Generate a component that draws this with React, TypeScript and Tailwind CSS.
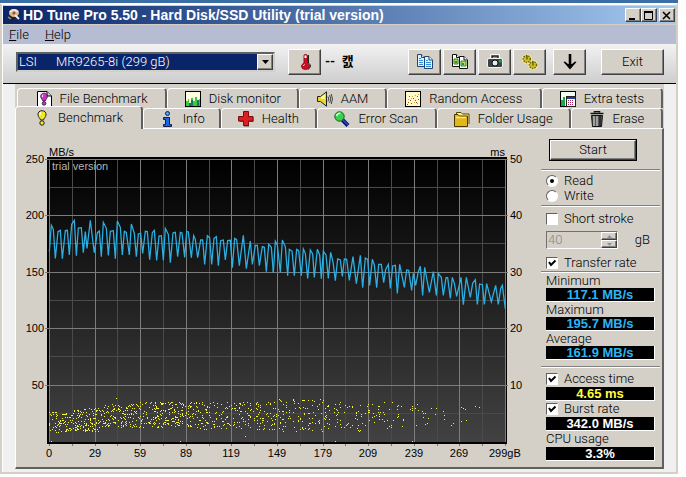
import type { ReactNode } from 'react';

const RAISED =
  'border border-t-white border-l-white border-r-[#404040] border-b-[#404040] bg-[#d4d0c8] shadow-[inset_-1px_-1px_0_#808080]';

const Icon = ({ children }: { children: ReactNode }) => (
  <svg width="16" height="16" viewBox="0 0 16 16" className="flex-shrink-0" aria-hidden="true">
    {children}
  </svg>
);

const DiskIcon = () => (
  <Icon>
    <path d="M1 9 L9 5 L13 9 L5 14 Z" fill="#222" />
    <ellipse cx="8" cy="6" rx="5" ry="4" fill="#d9b48c" />
    <path d="M4 5 Q8 1 12 5" stroke="#f7e3c8" strokeWidth="2" fill="none" />
    <circle cx="8" cy="6" r="1.5" fill="#8a5a34" />
    <path d="M9 8 L13 12" stroke="#eee" strokeWidth="2" />
    <path d="M2 10 L5 12" stroke="#9a9a9a" strokeWidth="1.5" />
  </Icon>
);

const BulbShape = ({ fill }: { fill: string }) => (
  <>
    <path d="M8 .7 C5.2 .7 3.7 2.6 4 5 C4.400 7.500 6.200 8.200 6.500 10 H9.500 C9.800 8.200 11.600 7.500 12 5 C12.300 2.600 10.800 .7 8 .7 Z" fill={fill} stroke="#222" />
    <path d="M7 2.200 Q5.600 3.400 6 5.500" stroke="#fff" strokeWidth="1.200" fill="none" />
    <circle cx="8" cy="13" r="2.200" fill={fill} stroke="#222" />
  </>
);

const BulbIcon = () => (
  <Icon>
    <BulbShape fill="#f2e81c" />
  </Icon>
);

const FileBulbIcon = () => (
  <Icon>
    <path d="M1.500 .5 H11 L15.500 5 V15.500 H1.500 Z" fill="#fff" stroke="#000" />
    <path d="M11 .5 V5 H15.500" fill="#ccc" stroke="#000" />
    <g transform="translate(1.400 1.600) scale(.83)">
      <BulbShape fill="#d62ad0" />
    </g>
  </Icon>
);

const MonitorIcon = () => (
  <Icon>
    <rect x=".5" y=".5" width="15" height="15" fill="#fffde0" stroke="#000" />
    <path d="M1 15 V10 H3 V8 H4 V12 H6 V7 H8 V10 H10 V6 H12 V9 H14 V8 H15 V15 Z" fill="#3ecb3a" />
    <path d="M4 15 V12 H6 V9 H8 V15 Z M12 15 V9 H14 V15 Z" fill="#0d7c62" />
  </Icon>
);

const SpeakerIcon = () => (
  <Icon>
    <path d="M.5 5.500 H3.500 L9.500 .8 V15.200 L3.500 10.500 H.5 Z" fill="#ecd820" stroke="#222" />
    <path d="M4 6 L8 3 V8 H4 Z" fill="#fff68c" />
    <path d="M11 5.500 Q12.500 8 11 10.500 M12.700 4 Q14.800 8 12.700 12 M14.300 3 Q16.600 8 14.300 13" stroke="#444" fill="none" />
  </Icon>
);

const RandomIcon = () => (
  <Icon>
    <rect x=".5" y=".5" width="15" height="15" fill="#fff9cf" stroke="#000" />
    <path d="M3 11.500h1M5 9.500h1M6 12.500h1M8 7.500h1M10 9.500h1M12 5.500h1M4 5.500h1M11 11.500h1M13 8.500h1M2 13.500h1" stroke="#a04c10" />
    <path d="M3 8.500h1M7 5.500h1M9 11.500h1M12 12.500h1M10 4.500h1M6 7.500h1M13 3.500h1" stroke="#d8a020" />
  </Icon>
);

const ExtraIcon = () => (
  <Icon>
    <rect x=".5" y=".5" width="15" height="15" fill="#f4fff4" stroke="#000" />
    <path d="M1 15 V9 H3 V6 H5 V15 Z" fill="#1da54a" />
    <rect x="6.500" y="5.500" width="9" height="10" fill="#fff" stroke="#222" />
    <path d="M7 7 H15" stroke="#283a9c" strokeWidth="2" />
    <path d="M8 9.500h1M10 9.500h1M12 9.500h1M8 11.500h1M10 11.500h1M12 11.500h1M8 13.500h1M10 13.500h1M12 13.500h1" stroke="#a02060" />
  </Icon>
);

const InfoIcon = () => (
  <Icon>
    <circle cx="8.500" cy="2.500" r="2" fill="#49a8f4" stroke="#0a1c50" />
    <path d="M4.500 6.500 H10.500 V13.500 H12.500 V15.500 H4.500 V13.500 H6.500 V8.500 H4.500 Z" fill="#1c66e0" stroke="#0a1c50" />
  </Icon>
);

const HealthIcon = () => (
  <Icon>
    <path d="M6 1.500 H11 V6 H15.500 V11 H11 V15.500 H6 V11 H1.500 V6 H6 Z" fill="#555" />
    <path d="M5.500 .5 H10.500 V5.500 H15 V10 H10.500 V14.500 H5.500 V10 H.5 V5.500 H5.500 Z" fill="#dd1f22" stroke="#7a0c0c" />
  </Icon>
);

const ScanIcon = () => (
  <Icon>
    <path d="M8.500 9 L14 14.500" stroke="#0b1560" strokeWidth="4" />
    <path d="M9 9 L14 14" stroke="#2848d8" strokeWidth="1.500" />
    <circle cx="5.500" cy="5.500" r="4.700" fill="#35d148" stroke="#145c20" />
    <path d="M2.500 5 Q3.500 2 6.500 2.300" stroke="#d6ffd6" strokeWidth="1.500" fill="none" />
  </Icon>
);

const FolderIcon = () => (
  <Icon>
    <path d="M2.500 13 V1.500 H7 L8.500 3 H15 V13" fill="#fff3a0" stroke="#5a4300" />
    <path d="M.5 3.500 H4 L5.500 5 H13.500 V15.500 H.5 Z" fill="#e2b71e" stroke="#4a3700" />
    <path d="M2 6.500 H12" stroke="#fbe873" strokeWidth="1.500" />
  </Icon>
);

const TrashIcon = () => (
  <Icon>
    <path d="M5.500 1.500 V.5 H10.500 V1.500 M1.500 2.500 H14.500" stroke="#111" strokeWidth="1.600" fill="none" />
    <path d="M2.500 4.500 H13.500 L12.500 15.500 H3.500 Z" fill="#555" stroke="#111" />
    <path d="M5 5 V15 M8 5 V15" stroke="#c8c8c8" strokeWidth="1.300" />
    <path d="M11 5 V15" stroke="#222" strokeWidth="1.500" />
  </Icon>
);

const ThermometerIcon = () => (
  <Icon>
    <path d="M7 9 V1.500 Q7 .5 8.500 .5 Q10 .5 10.500 1.500 V9 Q12.500 10.500 12.500 12 Q12 15.500 8.500 15.500 Q4.500 15.500 4.500 12 Q5 10 7 9 Z" fill="#cf1020" stroke="#8c1018" />
    <path d="M7.500 1.500 H9.500 V4 H7.500 Z" fill="#fff" />
    <path d="M11.500 1 V9 Q13.500 10.500 13.500 12 Q13 14.500 11 15.500" stroke="#222" fill="none" />
    <path d="M6.500 12 Q6.500 11 7.500 10.500" stroke="#fff" fill="none" />
  </Icon>
);

const CopyPages = ({ pictures = false }: { pictures?: boolean }) => (
  <Icon>
    <g fill={pictures ? '#fff' : '#dff0ff'} stroke={pictures ? '#111' : '#24446c'}>
      <path d="M.5 .5 H4.500 L7.500 3.500 V12.500 H.5 Z" />
      <path d="M4.500 .5 V3.500 H7.500" />
      <path d="M7.500 2.500 H12 L15.500 6 V14.500 H7.500 Z" />
      <path d="M12 2.500 V6 H15.500" />
    </g>
    {pictures ? (
      <>
        <path d="M2 5 H6 V10 H2 Z M9 7 H14 V12 H9 Z" fill="#c4dc50" stroke="#2e7e26" />
        <path d="M3 7 H5 V9 H3 Z M10 9 H12 V11 H10 Z" fill="#1b9a36" />
      </>
    ) : (
      <path d="M2 4.500 H4 M2 6.500 H6 M2 8.500 H6 M2 10.500 H6 M9 6.500 H11 M9 8.500 H14 M9 10.500 H14 M9 12.500 H14" stroke="#2f8be8" />
    )}
  </Icon>
);

const CameraIcon = () => (
  <Icon>
    <path d="M4.500 5 V1.500 H11.500 V5" fill="#bbb" stroke="#fff" strokeWidth="2.500" />
    <path d="M5 5 V2 H11 V5" fill="#999" stroke="#222" strokeWidth="1.500" />
    <rect x=".5" y="4.500" width="15" height="9" rx="1.500" fill="#3c4146" stroke="#f2f2f2" />
    <circle cx="8" cy="9" r="3" fill="#e8eef0" stroke="#111" />
    <path d="M12 6 H14.500 V8.500 H12 Z" fill="#22a64c" />
  </Icon>
);

const GearsIcon = () => (
  <Icon>
    <g stroke="#f7f3a4" strokeWidth="2" fill="#cfc01e">
      <ellipse cx="4.800" cy="5" rx="4" ry="3.800" />
      <ellipse cx="11" cy="11" rx="4" ry="3.800" />
    </g>
    <g fill="#cfc01e" stroke="#6e6510" strokeWidth="1.500" strokeDasharray="1.500 1">
      <ellipse cx="4.800" cy="5" rx="3.600" ry="3.400" />
      <ellipse cx="11" cy="11" rx="3.600" ry="3.400" />
    </g>
    <path d="M5 1.500 V5.500 M11 7.500 V11.500" stroke="#3a3500" />
  </Icon>
);

const ArrowDownIcon = () => (
  <Icon>
    <path d="M8 0 V12" stroke="#000" strokeWidth="2.600" />
    <path d="M1.500 8 L3 7.500 L6 10 H10 L13 7.500 L14.500 8 L8 15.500 Z" fill="#000" />
  </Icon>
);

// x,y pairs in thirds of a pixel, from the top left corner of the axis area
const RATE_START = `103,335 109,256 115,268 121,355 129,275 136,271 142,356 151,272 157,271 163,345 170,253 178,241 184,347
190,264 199,263 205,338 211,275 216,325 226,241 233,300 238,338 247,278 253,273 259,350 265,247 274,265 280,346 286,274
295,272 301,356 307,243 316,262 322,345 328,274 334,277 343,345 349,252 358,280 364,350 370,282 377,280 383,340 391,274
397,275 404,359 412,278 418,271 425,361 432,288 439,287 445,361 451,265 460,283 466,368 474,279 481,277 488,350 496,277
501,279 509,352 515,274 520,276 529,353 536,287 541,298 548,353 557,300 563,300 569,373 577,287 584,293 590,373 597,295
604,290 610,377 617,302 625,300 631,360 638,302 646,301 652,383 659,295 665,299 673,377 685,286 694,386 706,303 712,373
721,316 727,316 733,377 742,320 748,322 754,395 761,313 769,322 775,398`;

const RATE_END = `10,398 16,304 22,315 31,397 37,300 46,320 53,407 58,328 66,333 73,407 80,328 86,332 94,407 100,327 106,340
113,415 121,330 128,342 133,412 142,328 149,345 154,416 160,334 168,345 175,415 182,337 189,365 196,422 203,357 211,360
217,409 223,357 230,358 238,421 249,350 259,431 271,346 278,443 286,354 293,358 299,436 307,358 313,375 320,443 326,373
334,373 341,428 347,388 355,373 361,445 368,378 376,376 382,460 389,373 403,442 410,390 416,391 425,451 430,400 437,436
445,395 451,379 458,466 464,382 478,457 490,395 499,466 505,401 514,412 520,466 528,413 533,413 541,475 547,412 553,430
560,469 573,412 580,494 589,412 601,472 608,430 616,419 622,493 629,432 637,434 643,493 650,431 664,485 677,436 685,493
692,445 697,436 706,506`;

const makeAccessDots = () => {
  let seed = 7219;
  const rand = () => {
    seed = (seed * 16807) % 2147483647;
    return seed / 2147483647;
  };
  // from, to, number of dots, top and bottom of the band
  const bands = [
    [49, 62, 42, 412, 433],
    [62, 82, 80, 410, 432],
    [82, 100, 75, 408, 432],
    [100, 140, 140, 404, 428],
    [140, 200, 220, 402, 428],
    [200, 277, 190, 402, 430],
    [277, 325, 95, 399, 432],
    [325, 370, 70, 402, 432],
    [370, 394, 28, 402, 431],
    [394, 440, 28, 402, 427],
    [440, 480, 12, 400, 427],
  ];
  let d = 'M51 441h1M116 398h1M180 441h1M245 436h1M335 441h1M412 441h1';
  bands.forEach(([from, to, count, top, bottom]) => {
    for (let i = 0; i < count; i++) {
      const x = Math.floor(from + rand() * (to - from));
      const y = Math.floor(top + rand() * (bottom - top));
      d += `M${x} ${y}h1`;
    }
  });
  return d;
};

const ACCESS_DOTS = makeAccessDots();
const X_LABELS = ['0', '29', '59', '89', '119', '149', '179', '209', '239', '269'];
const Y_LINES = [159, 215, 272, 328, 385];
const column = (i: number) => Math.round(49 + i * 22.8);

const Chart = () => (
  <svg
    viewBox="16 129 524 338"
    className="block w-full font-['Liberation_Sans',Arial,sans-serif] text-[11px]"
    role="img"
    aria-label="Transfer rate and access time"
  >
    <defs>
      <linearGradient id="plot" x1="0" y1="0" x2="0" y2="1">
        <stop offset="0" stopColor="#000" />
        <stop offset="1" stopColor="#424242" />
      </linearGradient>
    </defs>
    <rect x="47" y="157" width="460" height="287" fill="#000" />
    <rect x="49" y="159" width="457" height="283" fill="url(#plot)" />
    <g shapeRendering="crispEdges">
      {Y_LINES.map((y) => (
        <rect key={y} x="49" y={y + 28} width="457" height="1" fill="#4a4a4a" />
      ))}
      {Array.from({ length: 21 }, (_, i) => (
        <rect key={i} x={column(i)} y="159" width="1" height="283" fill={i % 2 ? '#4a4a4a' : '#7c7c7c'} />
      ))}
      {Y_LINES.map((y) => (
        <rect key={y} x="45" y={y} width="463" height="1" fill="#7c7c7c" />
      ))}
      {Array.from({ length: 21 }, (_, i) => (
        <rect key={i} x={column(i)} y="444" width="1" height="2" fill="#777" />
      ))}
      <path d={ACCESS_DOTS} transform="translate(0 .5)" stroke="#f4f431" fill="none" />
    </g>
    <g fill="none" stroke="#2cb0e4" strokeWidth="3.800">
      <polyline points={RATE_START} transform="translate(15 140) scale(.33333)" />
      <polyline points={RATE_END} transform="translate(270 140) scale(.33333)" />
    </g>
    <text x="49" y="156">MB/s</text>
    <text x="505" y="156" textAnchor="end">ms</text>
    <text x="52" y="170" fill="#b4b4b4">trial version</text>
    {Y_LINES.map((y, i) => (
      <g key={y}>
        <text x="44" y={y + 4} textAnchor="end">{250 - i * 50}</text>
        <text x="510" y={y + 4}>{50 - i * 10}</text>
      </g>
    ))}
    {X_LABELS.map((label, i) => (
      <text key={label} x={column(i * 2)} y="457" textAnchor="middle">{label}</text>
    ))}
    <text x="489" y="457">299gB</text>
  </svg>
);

const Tab = ({ icon, label, className }: { icon: ReactNode; label: string; className: string }) => (
  <button
    type="button"
    role="tab"
    className={`flex grow items-center justify-center gap-2 rounded-t-sm border-t border-l border-r-2 border-t-white border-l-white border-r-[#606060] bg-[#d4d0c8] whitespace-nowrap ${className}`}
  >
    {icon}
    {label}
  </button>
);

const ToolButton = ({ label, children }: { label: string; children: ReactNode }) => (
  <button type="button" aria-label={label} className={`flex h-[26px] w-[33px] items-center justify-center ${RAISED}`}>
    {children}
  </button>
);

const Check = ({ label, checked = false }: { label: string; checked?: boolean }) => (
  <label className="ml-[5px] flex h-4 items-center gap-[6px]">
    <span className="grid">
      <input
        type="checkbox"
        defaultChecked={checked}
        className="peer col-start-1 row-start-1 size-3 appearance-none border border-t-[#606060] border-r-white border-b-white border-l-[#606060] bg-white"
      />
      <svg viewBox="0 0 12 12" className="pointer-events-none invisible col-start-1 row-start-1 size-3 peer-checked:visible">
        <path d="M3 5 L5 8 L9.500 3.500" stroke="#000" strokeWidth="2" fill="none" />
      </svg>
    </span>
    {label}
  </label>
);

const Radio = ({ label, checked = false }: { label: string; checked?: boolean }) => (
  <label className="ml-[5px] flex h-[15px] items-center gap-[6px]">
    <span className="grid place-items-center">
      <input
        type="radio"
        name="mode"
        defaultChecked={checked}
        className="peer col-start-1 row-start-1 size-3 appearance-none rounded-full border border-t-[#606060] border-r-white border-b-white border-l-[#606060] bg-white"
      />
      <span className="pointer-events-none invisible col-start-1 row-start-1 size-1 rounded-full bg-black peer-checked:visible" />
    </span>
    {label}
  </label>
);

const Readout = ({ value, color }: { value: string; color: string }) => (
  <output className={`mr-[5px] ml-[5px] block h-[14px] border-r border-b border-white bg-black text-center font-['Liberation_Sans',Arial,sans-serif] text-[13px] leading-[13px] font-bold ${color}`}>
    {value}
  </output>
);

const Divider = () => <hr className="h-[2px] border-t border-b border-t-[#808080] border-b-white" />;

const Sidebar = () => (
  <div className="w-[122px] flex-shrink-0 pt-[10px] pr-[2px] pl-px">
    <button type="button" className="ml-2 block h-[22px] w-[88px] border border-black">
      <span className={`flex h-5 items-center justify-center ${RAISED}`}>Start</span>
    </button>
    <div className="mt-2">
      <Divider />
    </div>
    <div className="py-[2px]">
      <Radio label="Read" checked />
      <Radio label="Write" />
    </div>
    <Divider />
    <div className="pt-1">
      <Check label="Short stroke" />
    </div>
    <div className="mt-1 ml-[5px] flex h-[18px] items-center justify-between pr-[10px]">
      <div className="flex h-[18px] w-[72px] items-center border border-t-[#707070] border-r-white border-b-white border-l-[#707070] pl-px">
        <input aria-label="Short stroke size" disabled defaultValue="40" className="w-0 flex-1 text-[#8a8680]" />
        <span className="flex h-full w-4 flex-col">
          <button type="button" disabled aria-label="Increase" className={`flex flex-1 items-center justify-center ${RAISED}`}>
            <svg width="5" height="3" viewBox="0 0 5 3"><path d="M0 3 L2.500 0 L5 3 Z" fill="#909090" /></svg>
          </button>
          <button type="button" disabled aria-label="Decrease" className={`flex flex-1 items-center justify-center ${RAISED}`}>
            <svg width="5" height="3" viewBox="0 0 5 3"><path d="M0 0 L2.500 3 L5 0 Z" fill="#909090" /></svg>
          </button>
        </span>
      </div>
      gB
    </div>
    <div className="mt-[6px]">
      <Check label="Transfer rate" checked />
    </div>
    <Divider />
    <div className="ml-[5px] h-[15px] leading-[15px]">Minimum</div>
    <Readout value="117.1 MB/s" color="text-[#2cb4f4]" />
    <div className="ml-[5px] h-[15px] leading-[15px]">Maximum</div>
    <Readout value="195.7 MB/s" color="text-[#2cb4f4]" />
    <div className="ml-[5px] h-[15px] leading-[15px]">Average</div>
    <Readout value="161.9 MB/s" color="text-[#2cb4f4]" />
    <div className="mt-[6px] mb-[3px]">
      <Divider />
    </div>
    <Check label="Access time" checked />
    <Readout value="4.65 ms" color="text-[#ffff3c]" />
    <Check label="Burst rate" checked />
    <Readout value="342.0 MB/s" color="text-white" />
    <div className="ml-[5px] h-4 leading-4">CPU usage</div>
    <Readout value="3.3%" color="text-white" />
  </div>
);

const TitleBar = () => (
  <div className="flex h-[18px] items-center gap-px bg-gradient-to-r from-[#0a246a] to-[#a6caf0] pr-px pl-[3px]">
    <DiskIcon />
    <h1 className="flex-1 font-['Liberation_Sans',Arial,sans-serif] text-[14px] leading-[18px] font-bold whitespace-nowrap text-white">
      HD Tune Pro 5.50 - Hard Disk/SSD Utility (trial version)
    </h1>
    <div className="flex">
      <button type="button" aria-label="Minimize" className={`h-[14px] w-4 ${RAISED}`}>
        <svg width="13" height="11" viewBox="0 0 13 11"><path d="M3 9 H9" stroke="#000" strokeWidth="2" /></svg>
      </button>
      <button type="button" aria-label="Maximize" className={`mr-[2px] h-[14px] w-4 ${RAISED}`}>
        <svg width="13" height="11" viewBox="0 0 13 11"><path d="M2.500 2 V9.500 H10.500 V2" stroke="#000" fill="none" /><path d="M2 2 H11" stroke="#000" strokeWidth="2" /></svg>
      </button>
      <button type="button" aria-label="Close" className={`h-[14px] w-4 ${RAISED}`}>
        <svg width="13" height="11" viewBox="0 0 13 11"><path d="M3 2 L10 9 M10 2 L3 9" stroke="#000" strokeWidth="1.600" /></svg>
      </button>
    </div>
  </div>
);

const Toolbar = () => (
  <div className="flex h-10 items-start border-b border-black bg-gradient-to-b from-[#f2f2f2] to-[#cecece] pt-[5px] pr-3 pl-[13px]">
    <div className="relative mt-[3px] w-[259px]">
      <select
        aria-label="Drive"
        className="block h-5 w-full appearance-none border-2 border-t-[#606060] border-r-[#d4d0c8] border-b-[#d4d0c8] border-l-[#606060] bg-[#0a246a] pl-px leading-4 text-white"
      >
        <option>LSI{'\u00a0\u00a0\u00a0\u00a0\u00a0\u00a0'}MR9265-8i (299 gB)</option>
      </select>
      <span className={`pointer-events-none absolute top-[2px] right-[2px] flex h-4 w-4 items-center justify-center ${RAISED}`}>
        <svg width="7" height="4" viewBox="0 0 7 4"><path d="M0 0 H7 L3.500 4 Z" /></svg>
      </span>
    </div>
    <div className="ml-[13px] flex flex-1 items-center">
      <ToolButton label="Temperature"><ThermometerIcon /></ToolButton>
      <span className="ml-1 leading-5 font-bold whitespace-pre">--  캜</span>
    </div>
    <div className="flex gap-[2px]">
      <ToolButton label="Copy text"><CopyPages /></ToolButton>
      <ToolButton label="Copy image"><CopyPages pictures /></ToolButton>
      <ToolButton label="Screenshot"><CameraIcon /></ToolButton>
      <ToolButton label="Options"><GearsIcon /></ToolButton>
    </div>
    <div className="mr-[15px] ml-[7px]">
      <ToolButton label="Save"><ArrowDownIcon /></ToolButton>
    </div>
    <button type="button" className={`h-[26px] w-[63px] ${RAISED}`}>Exit</button>
  </div>
);

export default function App() {
  return (
    <div className="min-h-screen bg-white font-['Roboto','Noto_Sans_CJK_KR',sans-serif] text-[13px] font-light text-black">
      <main className="mr-2 border-t-[3px] border-[#3a6ea5]">
        <div className="border-2 border-[#d4d0c8] border-t-white pl-px">
          <div className="h-px bg-[#d4d0c8]" />
          <TitleBar />
          <nav className="flex h-5 items-center gap-4 border-t border-[#d4d0c8] bg-[#b6bdd2] pl-[6px]">
            <button type="button"><span className="underline">F</span>ile</button>
            <button type="button"><span className="underline">H</span>elp</button>
          </nav>
          <Toolbar />
          <div className="bg-[#f0f0f0] pr-3 pb-[3px] pl-3">
            <div className="bg-[#d4d0c8] pt-1" role="tablist">
              <div className="flex pr-px pl-[2px]">
                <Tab className="h-5 basis-[150px]" icon={<FileBulbIcon />} label="File Benchmark" />
                <Tab className="h-5 basis-[132px]" icon={<MonitorIcon />} label="Disk monitor" />
                <Tab className="h-5 basis-[87px]" icon={<SpeakerIcon />} label="AAM" />
                <Tab className="h-5 basis-[155px]" icon={<RandomIcon />} label="Random Access" />
                <Tab className="h-5 basis-[121px]" icon={<ExtraIcon />} label="Extra tests" />
              </div>
              <div className="flex pr-px">
                <Tab className="relative z-10 -mt-[2px] -mb-px h-[23px] basis-[128px]" icon={<BulbIcon />} label="Benchmark" />
                <Tab className="h-5 basis-[78px]" icon={<InfoIcon />} label="Info" />
                <Tab className="h-5 basis-[95px]" icon={<HealthIcon />} label="Health" />
                <Tab className="h-5 basis-[120px]" icon={<ScanIcon />} label="Error Scan" />
                <Tab className="h-5 basis-[134px]" icon={<FolderIcon />} label="Folder Usage" />
                <Tab className="h-5 basis-[92px]" icon={<TrashIcon />} label="Erase" />
              </div>
            </div>
            <section className="flex border-t border-r-2 border-b-2 border-l border-t-white border-r-[#606060] border-b-[#606060] border-l-white bg-[#d4d0c8]">
              <div className="min-w-0 flex-1">
                <Chart />
              </div>
              <Sidebar />
            </section>
          </div>
        </div>
      </main>
    </div>
  );
}
